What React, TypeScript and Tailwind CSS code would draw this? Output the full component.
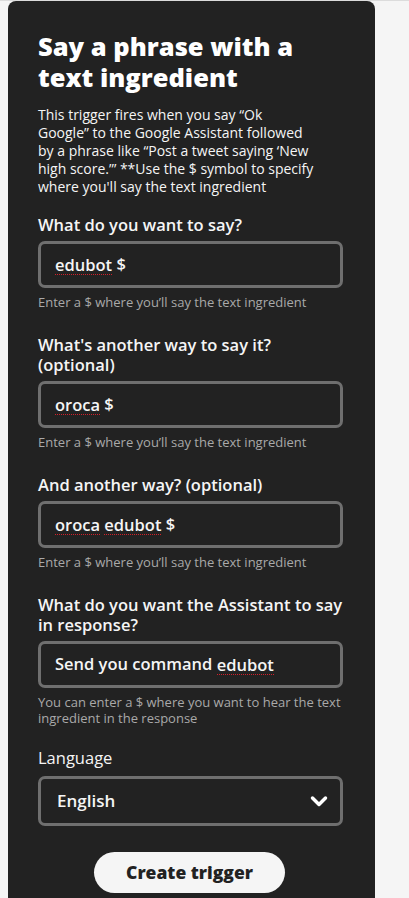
import { ReactNode } from "react";

const FONT = { fontFamily: "'Open Sans', Lato, sans-serif" };

// red spellcheck squiggle under unknown words
function Typo({ children }: { children: ReactNode }) {
  return (
    <span className="inline-block border-b border-dotted border-[#d0212b] leading-[19px]">
      {children}
    </span>
  );
}

function Field({
  label,
  value,
  help,
}: {
  label: ReactNode;
  value: ReactNode;
  help: ReactNode;
}) {
  return (
    <div>
      <label className="block text-[16.5px] font-semibold leading-[20px] text-[#f5f5f5]">
        {label}
      </label>
      <div className="mt-[6px] flex h-[47px] items-center rounded-[7px] border-[3px] border-[#6f6f6f] pl-[14px] text-[16.5px] font-semibold text-[#f5f5f5]">
        {value}
      </div>
      <p className="mt-[6px] text-[13px] leading-[16px] text-[#a9a9a9]">{help}</p>
    </div>
  );
}

export default function App() {
  return (
    <div style={FONT} className="min-h-[898px] border-t border-[#dcdcdc] bg-[#f5f5f5] pl-[8px]">
      <div className="min-h-[897px] w-[367px] rounded-t-[8px] bg-[#222222] pl-[30px] pr-[32px] pt-[30px]">
        <h1 className="text-[25.5px] font-extrabold leading-[31px] text-white">
          Say a phrase with a
          <br />
          text ingredient
        </h1>
        <p className="mt-[13px] text-[14px] leading-[18px] text-[#f5f5f5]">
          This trigger fires when you say “Ok
          <br />
          Google” to the Google Assistant followed
          <br />
          by a phrase like “Post a tweet saying ‘New
          <br />
          high score.’” **Use the $ symbol to specify
          <br />
          where you'll say the text ingredient
        </p>

        <div className="mt-[19px] flex flex-col gap-[25px]">
          <Field
            label="What do you want to say?"
            value={
              <>
                <Typo>edubot</Typo>&nbsp;$
              </>
            }
            help="Enter a $ where you’ll say the text ingredient"
          />
          <Field
            label={
              <>
                What's another way to say it?
                <br />
                (optional)
              </>
            }
            value={
              <>
                <Typo>oroca</Typo>&nbsp;$
              </>
            }
            help="Enter a $ where you’ll say the text ingredient"
          />
          <Field
            label="And another way? (optional)"
            value={
              <>
                <Typo>oroca</Typo>&nbsp;<Typo>edubot</Typo>&nbsp;$
              </>
            }
            help="Enter a $ where you’ll say the text ingredient"
          />
          <Field
            label={
              <>
                What do you want the Assistant to say
                <br />
                in response?
              </>
            }
            value={
              <>
                Send you command&nbsp;<Typo>edubot</Typo>
              </>
            }
            help={
              <>
                You can enter a $ where you want to hear the text
                <br />
                ingredient in the response
              </>
            }
          />
        </div>

        <div className="mt-[22px]">
          <label className="block text-[16.5px] leading-[20px] text-[#f5f5f5]">Language</label>
          <div className="mt-[8px] flex h-[50px] items-center justify-between rounded-[7px] border-[3px] border-[#6f6f6f] pl-[16px] pr-[12px] text-[17px] font-semibold text-[#f5f5f5]">
            <span>English</span>
            <svg width="18" height="14" viewBox="0 0 18 14" fill="none">
              <path d="M2.5 4l6.5 6.5L15.5 4" stroke="#ffffff" strokeWidth="3.5" strokeLinecap="round" strokeLinejoin="round" />
            </svg>
          </div>
        </div>

        <div className="mt-[26px] flex justify-center pr-[2px]">
          <button className="h-[41px] w-[191px] rounded-full bg-[#f5f5f5] text-[17.5px] font-extrabold text-[#222222]">
            Create trigger
          </button>
        </div>
      </div>
    </div>
  );
}
